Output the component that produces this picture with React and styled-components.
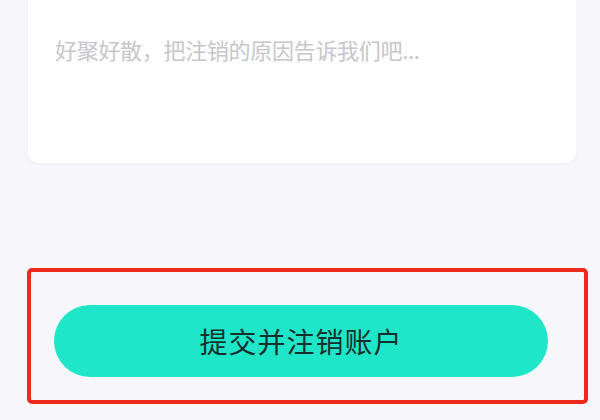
import React from 'react'
import styled, { createGlobalStyle } from 'styled-components'

const GlobalStyle = createGlobalStyle`
    html, body {
        margin: 0;
        padding: 0;
        background: #f6f6fb;
        font-family: "Noto Sans CJK SC", "Noto Sans", sans-serif;
    }
`

const Page = styled.div`
    width: 600px;
    height: 420px;
    overflow: hidden;
    display: flex;
    flex-direction: column;
    background: #f6f6fb;
`

const Card = styled.div`
    margin: -40px 24px 0 28px;
    height: 203px;
    box-sizing: border-box;
    padding: 74px 27px 0;
    background: #ffffff;
    border-radius: 10px;
    box-shadow: 0 1px 3px rgba(200, 200, 220, 0.18);
`

const Placeholder = styled.div`
    font-size: 22px;
    line-height: 30px;
    color: #c6c6cb;
    letter-spacing: -0.3px;
`

const Highlight = styled.div`
    margin: 105px 12px 0 27px;
    height: 136px;
    box-sizing: border-box;
    border: 4px solid #ee2a20;
    border-radius: 5px;
    padding: 33px 36px 0 23px;
`

const SubmitButton = styled.button`
    width: 100%;
    height: 72px;
    border: none;
    border-radius: 36px;
    background: #1fe6c9;
    color: #17302c;
    font-family: "Noto Sans CJK SC", "Noto Sans", sans-serif;
    font-size: 28px;
    letter-spacing: 1px;
    cursor: pointer;
    display: flex;
    align-items: center;
    justify-content: center;
`

const App = () => {
    return (
        <Page>
            <GlobalStyle />
            <Card>
                <Placeholder>好聚好散，把注销的原因告诉我们吧...</Placeholder>
            </Card>
            <Highlight>
                <SubmitButton>提交并注销账户</SubmitButton>
            </Highlight>
        </Page>
    )
}

export default App
